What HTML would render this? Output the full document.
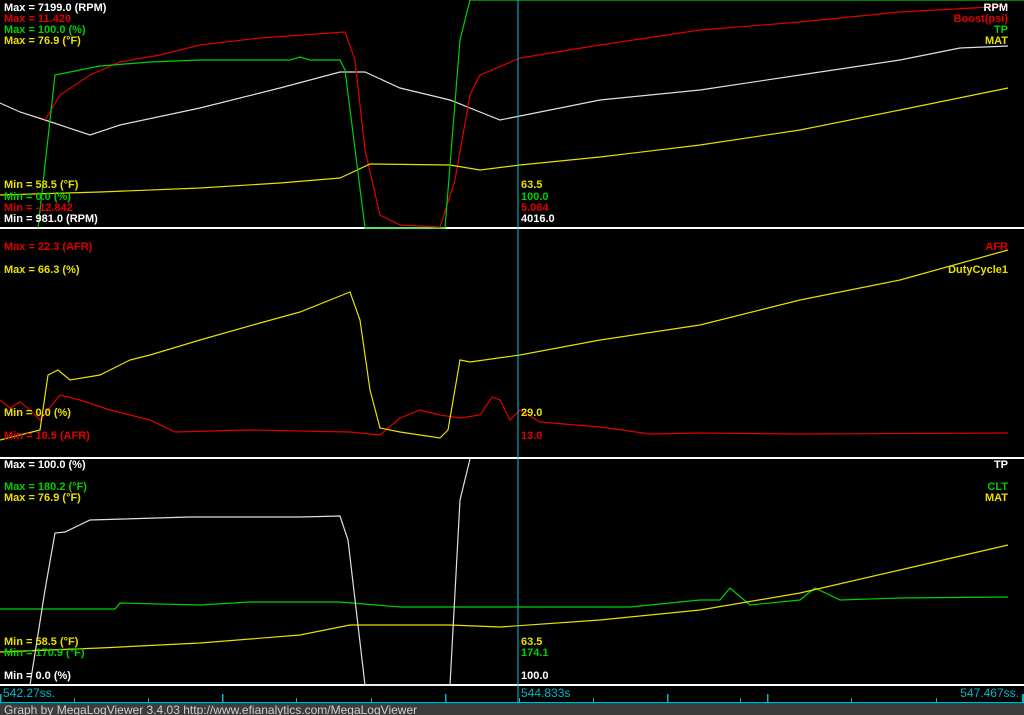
<!DOCTYPE html>
<html><head><meta charset="utf-8"><style>
html,body{margin:0;padding:0;background:#000;}
svg{display:block}
text{font-family:"Liberation Sans",sans-serif;font-size:11px;font-weight:bold}
.w{fill:#fff}.r{fill:#e00000}.g{fill:#00d000}.y{fill:#e8e000}.c{fill:#00b8c8}
polyline{fill:none;stroke-width:1.2}
</style></head><body>
<svg width="1024" height="715" viewBox="0 0 1024 715">
<rect width="1024" height="715" fill="#000"/>
<rect x="0" y="227" width="1024" height="2" fill="#fff"/>
<rect x="0" y="457" width="1024" height="2" fill="#fff"/>
<rect x="0" y="684" width="1024" height="2" fill="#fff"/>
<!-- panel1 -->
<polyline stroke="#e0e0e0" points="0,103 20,112 45,120 90,135 120,125 200,108 280,88 340,72 365,72 400,88 450,100 500,120 520,116 600,100 700,90 800,75 900,60 960,48 1008,46"/>
<polyline stroke="#e00000" points="45,120 60,95 90,75 120,62 160,55 200,45 260,38 345,32 355,60 365,150 380,215 400,225 440,227 455,180 470,95 480,75 520,58 600,45 700,30 800,22 900,12 1008,6"/>
<polyline stroke="#e8e000" points="0,195 100,192 200,188 280,183 340,178 370,164 450,165 480,170 520,165 600,157 700,145 800,130 900,110 1008,88"/>
<polyline stroke="#00d000" points="38,228 55,75 70,72 100,66 150,62 200,60 290,60 300,57 310,60 340,60 345,70 365,228 445,228 460,40 470,0 1024,0"/>
<text x="4" y="11" class="w">Max = 7199.0 (RPM)</text>
<text x="4" y="22" class="r">Max = 11.420</text>
<text x="4" y="33" class="g">Max = 100.0 (%)</text>
<text x="4" y="44" class="y">Max = 76.9 (°F)</text>
<text x="1008" y="11" class="w" text-anchor="end">RPM</text>
<text x="1008" y="22" class="r" text-anchor="end">Boost(psi)</text>
<text x="1008" y="33" class="g" text-anchor="end">TP</text>
<text x="1008" y="44" class="y" text-anchor="end">MAT</text>
<text x="4" y="188" class="y">Min = 58.5 (°F)</text>
<text x="4" y="200" class="g">Min = 0.0 (%)</text>
<text x="4" y="211" class="r">Min = -12.842</text>
<text x="4" y="222" class="w">Min = 981.0 (RPM)</text>
<text x="521" y="188" class="y">63.5</text>
<text x="521" y="200" class="g">100.0</text>
<text x="521" y="211" class="r">5.064</text>
<text x="521" y="222" class="w">4016.0</text>
<!-- panel2 -->
<polyline stroke="#e00000" points="0,400 10,408 20,402 30,410 40,420 60,395 80,400 110,410 150,420 175,432 250,430 350,432 380,435 400,418 420,410 440,415 460,418 480,415 492,397 500,400 510,420 520,410 540,422 600,427 650,434 700,433 800,434 1008,433"/>
<polyline stroke="#e8e000" points="0,440 40,430 48,375 58,370 70,380 100,375 130,360 150,355 200,340 260,323 300,312 350,292 360,320 370,390 380,428 400,432 440,438 448,430 460,360 470,362 520,355 600,340 700,325 800,300 900,280 1008,250"/>
<text x="4" y="250" class="r">Max = 22.3 (AFR)</text>
<text x="4" y="273" class="y">Max = 66.3 (%)</text>
<text x="1008" y="250" class="r" text-anchor="end">AFR</text>
<text x="1008" y="273" class="y" text-anchor="end">DutyCycle1</text>
<text x="4" y="416" class="y">Min = 0.0 (%)</text>
<text x="4" y="439" class="r">Min = 10.5 (AFR)</text>
<text x="521" y="416" class="y">29.0</text>
<text x="521" y="439" class="r">13.0</text>
<!-- panel3 -->
<polyline stroke="#00d000" points="0,609 115,609 120,603 200,605 250,602 340,602 400,607 630,607 700,600 720,600 730,588 750,605 800,600 815,588 840,600 900,598 1008,597"/>
<polyline stroke="#e8e000" points="0,652 100,648 200,643 300,635 350,625 450,625 500,627 600,620 700,610 800,593 900,570 1008,545"/>
<polyline stroke="#e0e0e0" points="30,685 45,590 55,533 65,532 90,520 190,517 300,517 340,516 348,540 365,685 450,685 460,500 470,459"/>
<text x="4" y="468" class="w">Max = 100.0 (%)</text>
<text x="4" y="490" class="g">Max = 180.2 (°F)</text>
<text x="4" y="501" class="y">Max = 76.9 (°F)</text>
<text x="1008" y="468" class="w" text-anchor="end">TP</text>
<text x="1008" y="490" class="g" text-anchor="end">CLT</text>
<text x="1008" y="501" class="y" text-anchor="end">MAT</text>
<text x="4" y="645" class="y">Min = 58.5 (°F)</text>
<text x="4" y="656" class="g">Min = 170.9 (°F)</text>
<text x="4" y="679" class="w">Min = 0.0 (%)</text>
<text x="521" y="645" class="y">63.5</text>
<text x="521" y="656" class="g">174.1</text>
<text x="521" y="679" class="w">100.0</text>
<rect x="517.5" y="0" width="1" height="703" fill="#00c8d8"/>
<text x="3" y="697" class="c" style="font-weight:normal;font-size:12px">542.27ss.</text>
<text x="521" y="697" class="c" style="font-weight:normal;font-size:12px">544.833s</text>
<text x="1019" y="697" class="c" text-anchor="end" style="font-weight:normal;font-size:12px">547.467ss.</text>
<rect x="0" y="702" width="1024" height="1.5" fill="#00b8c8"/>
<g fill="#00b8c8">
<rect x="0" y="694" width="1.5" height="9"/>
<rect x="74" y="698" width="1" height="5"/>
<rect x="148" y="698" width="1" height="5"/>
<rect x="222" y="694" width="1.5" height="9"/>
<rect x="296" y="698" width="1" height="5"/>
<rect x="371" y="698" width="1" height="5"/>
<rect x="445" y="694" width="1.5" height="9"/>
<rect x="519" y="698" width="1" height="5"/>
<rect x="593" y="698" width="1" height="5"/>
<rect x="667" y="694" width="1.5" height="9"/>
<rect x="740" y="698" width="1" height="5"/>
<rect x="851" y="698" width="1" height="5"/>
<rect x="936" y="698" width="1" height="5"/>
<rect x="1022" y="694" width="2" height="9"/>
<rect x="767" y="694" width="1.5" height="9"/>
</g>
<rect x="0" y="704" width="1024" height="11" fill="#3c3c3c"/>
<text x="4" y="714" style="font-weight:normal;font-size:12px;fill:#d0d0d0">Graph by MegaLogViewer 3.4.03 http://www.efianalytics.com/MegaLogViewer</text>
</svg>
</body></html>
